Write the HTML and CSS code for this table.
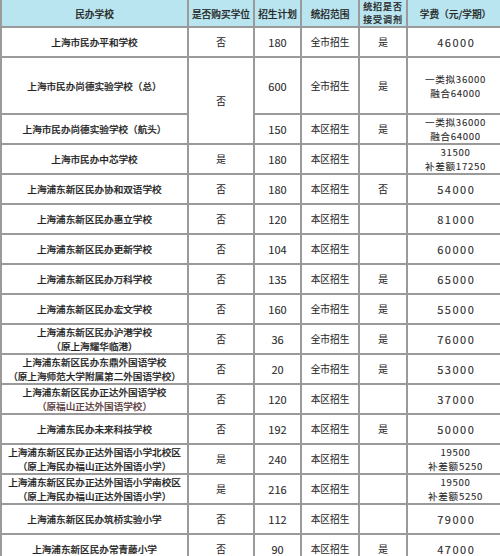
FILE: index.html
```html
<!DOCTYPE html>
<html lang="zh-CN">
<head>
<meta charset="utf-8">
<title>民办学校招生</title>
<link rel="stylesheet" href="styles.css">
</head>
<body>
<div class="sheet">
<table class="tbl">
  <colgroup>
    <col class="c1"><col class="c2"><col class="c3"><col class="c4"><col class="c5"><col class="c6">
  </colgroup>
  <thead>
    <tr class="hd">
      <th>民办学校</th>
      <th>是否购买学位</th>
      <th>招生计划</th>
      <th>统招范围</th>
      <th class="two">统招是否<br>接受调剂</th>
      <th>学费（元/学期）</th>
    </tr>
  </thead>
  <tbody>
    <tr><td class="nm">上海市民办平和学校</td><td>否</td><td class="num">180</td><td>全市招生</td><td>是</td><td class="fee">46000</td></tr>
    <tr class="tall"><td class="nm">上海市民办尚德实验学校（总）</td><td rowspan="2">否</td><td class="num">600</td><td>全市招生</td><td>是</td><td class="fee2">一类拟36000<br>融合64000</td></tr>
    <tr><td class="nm">上海市民办尚德实验学校（航头）</td><td class="num">150</td><td>本区招生</td><td>是</td><td class="fee2">一类拟36000<br>融合64000</td></tr>
    <tr><td class="nm">上海市民办中芯学校</td><td>是</td><td class="num">180</td><td>本区招生</td><td></td><td class="fee2">31500<br>补差额17250</td></tr>
    <tr><td class="nm">上海浦东新区民办协和双语学校</td><td>否</td><td class="num">180</td><td>本区招生</td><td>否</td><td class="fee">54000</td></tr>
    <tr><td class="nm">上海浦东新区民办惠立学校</td><td>否</td><td class="num">120</td><td>本区招生</td><td></td><td class="fee">81000</td></tr>
    <tr><td class="nm">上海浦东新区民办更新学校</td><td>否</td><td class="num">104</td><td>本区招生</td><td></td><td class="fee">60000</td></tr>
    <tr><td class="nm">上海浦东新区民办万科学校</td><td>否</td><td class="num">135</td><td>本区招生</td><td>是</td><td class="fee">65000</td></tr>
    <tr><td class="nm">上海浦东新区民办宏文学校</td><td>否</td><td class="num">160</td><td>全市招生</td><td>是</td><td class="fee">55000</td></tr>
    <tr><td class="nm">上海浦东新区民办沪港学校<br><span class="sub">（原上海耀华临港）</span></td><td>否</td><td class="num">36</td><td>全市招生</td><td>是</td><td class="fee">76000</td></tr>
    <tr><td class="nm">上海浦东新区民办东鼎外国语学校<br><span class="sub">（原上海师范大学附属第二外国语学校）</span></td><td>否</td><td class="num">20</td><td>全市招生</td><td>是</td><td class="fee">53000</td></tr>
    <tr><td class="nm">上海浦东新区民办正达外国语学校<br><span class="sub brown">（原福山正达外国语学校）</span></td><td>否</td><td class="num">120</td><td>本区招生</td><td></td><td class="fee">37000</td></tr>
    <tr><td class="nm">上海浦东民办未来科技学校</td><td>否</td><td class="num">192</td><td>本区招生</td><td>是</td><td class="fee">50000</td></tr>
    <tr><td class="nm">上海浦东新区民办正达外国语小学北校区<br><span class="sub">（原上海民办福山正达外国语小学）</span></td><td>是</td><td class="num">240</td><td>本区招生</td><td></td><td class="fee2">19500<br>补差额5250</td></tr>
    <tr><td class="nm">上海浦东新区民办正达外国语小学南校区<br><span class="sub">（原上海民办福山正达外国语小学）</span></td><td>是</td><td class="num">216</td><td>本区招生</td><td></td><td class="fee2">19500<br>补差额5250</td></tr>
    <tr><td class="nm">上海浦东新区民办筑桥实验小学</td><td>否</td><td class="num">112</td><td>本区招生</td><td></td><td class="fee">79000</td></tr>
    <tr><td class="nm">上海浦东新区民办常青藤小学</td><td>否</td><td class="num">90</td><td>本区招生</td><td>是</td><td class="fee">47000</td></tr>
  </tbody>
</table>
</div>
</body>
</html>
```

FILE: styles.css
```css
html, body {
  margin: 0;
  padding: 0;
  background: #ffffff;
}

body {
  font-family: "Noto Sans CJK SC", "Noto Sans", sans-serif;
  color: #2b2b2b;
  overflow: hidden;
}

.sheet {
  width: 500px;
  height: 556px;
  overflow: hidden;
}

.tbl {
  border-collapse: collapse;
  table-layout: fixed;
  width: 503px;
  margin-top: -4px;
}

.c1 { width: 187px; }
.c2 { width: 66px; }
.c3 { width: 47px; }
.c4 { width: 58px; }
.c5 { width: 48px; }
.c6 { width: 97px; }

.tbl th,
.tbl td {
  border: 2px solid #9a9a9a;
  padding: 0;
  text-align: center;
  vertical-align: middle;
  font-size: 9.7px;
  line-height: 14px;
  white-space: nowrap;
  overflow: hidden;
  -webkit-text-stroke: 0.1px #2b2b2b;
}

.tbl tr { height: 30px; }
.tbl tr.hd { height: 29px; }
.tbl tr.tall { height: 57px; }

.tbl th {
  background: #b8e5ef;
  font-weight: 500;
  color: #262626;
  padding-top: 3px;
  -webkit-text-stroke: 0.2px #262626;
}

.tbl th.two {
  font-size: 9px;
  line-height: 13px;
  letter-spacing: 0.9px;
  padding-top: 2px;
}

.tbl td.nm {
  font-weight: 500;
  color: #242424;
  font-size: 9.6px;
  line-height: 14px;
  -webkit-text-stroke: 0.2px #242424;
}

.brown { color: #5a3d3d; -webkit-text-stroke: 0.2px #5a3d3d; }

.tbl td.num { font-size: 11px; }

.tbl td.fee {
  font-size: 11px;
  letter-spacing: 1.5px;
  text-indent: 1.5px;
}

.tbl td.fee2 {
  font-size: 9.6px;
  line-height: 14px;
  letter-spacing: 0.7px;
}
```
